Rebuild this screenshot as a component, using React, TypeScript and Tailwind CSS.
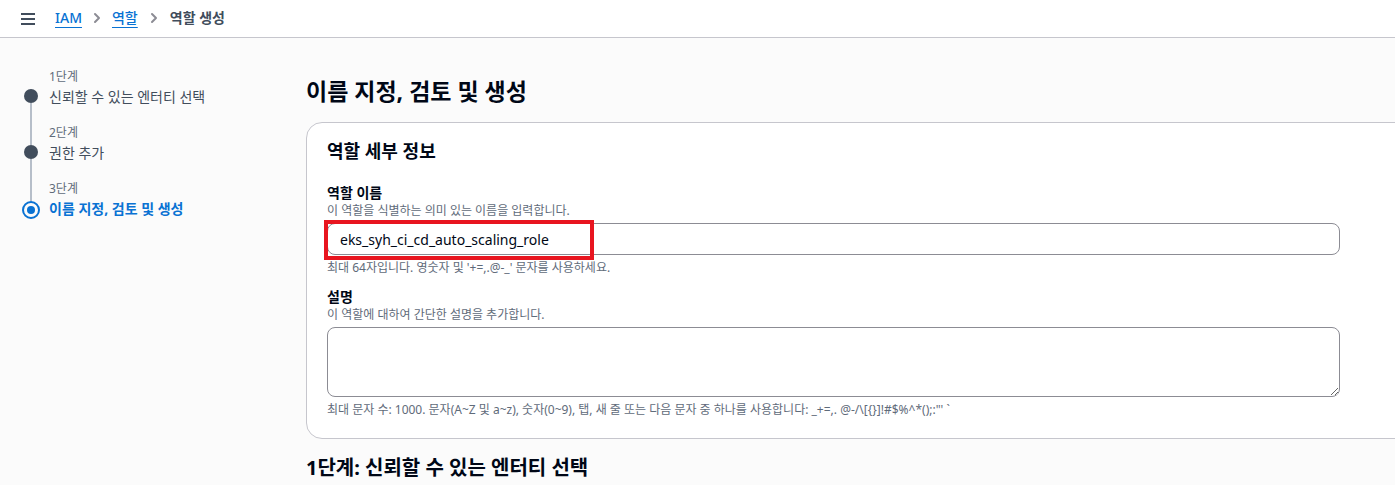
import { ChevronRight } from "lucide-react";

const font = {
  fontFamily: '"Noto Sans", "Noto Sans CJK KR", sans-serif',
};

const steps = [
  { n: "1단계", label: "신뢰할 수 있는 엔터티 선택", done: true },
  { n: "2단계", label: "권한 추가", done: true },
  { n: "3단계", label: "이름 지정, 검토 및 생성", done: false },
];

function Header() {
  return (
    <div className="h-[38px] flex items-center border-b border-[#c6c6cd] bg-white">
      <div className="w-[55px] flex flex-col gap-[3px] pl-[21px]">
        <span className="block w-[14px] h-[2px] bg-[#414d5c]" />
        <span className="block w-[14px] h-[2px] bg-[#414d5c]" />
        <span className="block w-[14px] h-[2px] bg-[#414d5c]" />
      </div>
      <nav className="flex items-center text-[14px] -mt-[2px]">
        <a className="text-[#0972d3] font-medium underline underline-offset-[4px]">IAM</a>
        <ChevronRight className="w-[16px] h-[16px] text-[#8c8c94] mx-[7px]" strokeWidth={3} />
        <a className="text-[#0972d3] font-medium underline underline-offset-[4px]">역할</a>
        <ChevronRight className="w-[16px] h-[16px] text-[#8c8c94] mx-[8px]" strokeWidth={3} />
        <span className="text-[#414d5c] font-bold">역할 생성</span>
      </nav>
    </div>
  );
}

function Steps() {
  return (
    <div className="w-[306px] pl-[23px] pt-[31px] shrink-0">
      {steps.map((s, i) => (
        <div key={s.n} className="flex">
          <div className="w-[16px] flex flex-col items-center">
            <div className={"w-[2px] h-[20px] " + (i === 0 ? "" : "bg-[#b6bec9]")} />
            {s.done ? (
              <div className="w-[14px] h-[14px] rounded-full bg-[#414d5c]" />
            ) : (
              <div className="w-[18px] h-[18px] rounded-full border-[2px] border-[#0972d3] flex items-center justify-center">
                <div className="w-[8px] h-[8px] rounded-full bg-[#0972d3]" />
              </div>
            )}
            {i < steps.length - 1 && <div className="w-[2px] flex-1 bg-[#b6bec9]" />}
          </div>
          <div className="pl-[10px] pb-[16px]">
            <div className="text-[12px] leading-[16px] text-[#5f6b7a]">{s.n}</div>
            <div
              className={
                "text-[14px] leading-[24px] " +
                (s.done ? "text-[#414d5c]" : "text-[#0972d3] font-bold")
              }
            >
              {s.label}
            </div>
          </div>
        </div>
      ))}
    </div>
  );
}

function Field({
  label,
  desc,
  hint,
  children,
}: {
  label: string;
  desc: string;
  hint: string;
  children: React.ReactNode;
}) {
  return (
    <div>
      <div className="text-[14px] leading-[20px] font-bold text-[#000716]">{label}</div>
      <div className="text-[12px] leading-[16px] text-[#5f6b7a]">{desc}</div>
      <div className="mt-[4px]">{children}</div>
      <div className="text-[12px] leading-[16px] text-[#5f6b7a] mt-[5px]">{hint}</div>
    </div>
  );
}

export default function App() {
  return (
    <div className="w-[1395px] h-[485px] overflow-hidden bg-[#fbfbfb]" style={font}>
      <Header />
      <div className="flex">
        <Steps />
        <main className="flex-1 pt-[38px] min-w-0">
          <h1 className="text-[23px] leading-[30px] font-bold text-[#000716] mb-[16px]">
            이름 지정, 검토 및 생성
          </h1>
          <section className="w-[1120px] bg-white border border-[#c6c6cd] rounded-[16px] pl-[20px] pt-[14px] pb-[20px]">
            <h2 className="text-[18px] leading-[28px] font-bold text-[#000716] mb-[18px]">
              역할 세부 정보
            </h2>
            <div className="flex flex-col gap-[11px]">
              <Field
                label="역할 이름"
                desc="이 역할을 식별하는 의미 있는 이름을 입력합니다."
                hint="최대 64자입니다. 영숫자 및 '+=,.@-_' 문자를 사용하세요."
              >
                <div className="relative w-[1013px]">
                  <input
                    readOnly
                    value="eks_syh_ci_cd_auto_scaling_role"
                    className="w-full h-[32px] rounded-[8px] border border-[#8c8c94] bg-white px-[12px] text-[14px] text-[#000716] outline-none"
                    style={font}
                  />
                  <div className="absolute left-[-3px] top-[-3px] w-[270px] h-[40px] border-[4px] border-[#e8151f] pointer-events-none" />
                </div>
              </Field>
              <Field
                label="설명"
                desc="이 역할에 대하여 간단한 설명을 추가합니다."
                hint={"최대 문자 수: 1000. 문자(A~Z 및 a~z), 숫자(0~9), 탭, 새 줄 또는 다음 문자 중 하나를 사용합니다: _+=,. @-/\\[{}]!#$%^*();:\"' `"}
              >
                <textarea
                  readOnly
                  className="block w-[1013px] h-[70px] rounded-[8px] border border-[#8c8c94] bg-white outline-none"
                />
              </Field>
            </div>
          </section>
          <h2 className="text-[20px] leading-[24px] font-bold text-[#000716] mt-[17px]">
            1단계: 신뢰할 수 있는 엔터티 선택
          </h2>
        </main>
      </div>
    </div>
  );
}
